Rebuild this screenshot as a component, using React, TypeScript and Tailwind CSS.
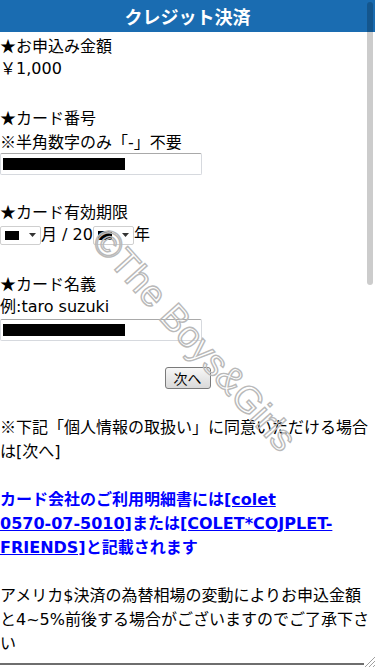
import React from "react";

const cjk = "font-['Noto_Sans_CJK_JP',sans-serif]";

function J({ children }: { children: React.ReactNode }) {
  return <span className={cjk}>{children}</span>;
}

function Line({ children }: { children?: React.ReactNode }) {
  return <div className="h-[24px] whitespace-nowrap">{children}</div>;
}

function Blank() {
  return <div className="h-[24px]" />;
}

function TextBox() {
  return (
    <div className="h-[22px] flex items-center">
      <div className="w-[202px] h-[22px] border border-[#d6d9de] border-t-[#a9a9a9] rounded-[2px] flex items-center pl-[2px] bg-white">
        <div className="w-[122px] h-[12px] bg-black" />
      </div>
    </div>
  );
}

function Select() {
  return (
    <div className="w-[41px] h-[19px] border border-[#cfcfcf] rounded-[2px] flex items-center pl-[4px] bg-white">
      <div className="w-[14px] h-[9px] bg-black" />
      <svg width="7" height="4" viewBox="0 0 7 4" className="ml-[10px]">
        <path d="M0 0 L7 0 L3.5 4 Z" fill="#333" />
      </svg>
    </div>
  );
}

export default function App() {
  return (
    <div className="relative min-h-[667px] h-[667px] overflow-hidden bg-white text-black text-[16px] leading-[24px] font-['DejaVu_Sans','Noto_Sans_CJK_JP',sans-serif]">
      <header className="h-[32px] bg-[#1a6cb1] flex items-center justify-center">
        <h1 className={`text-white font-bold text-[18px] leading-[24px] ${cjk}`}>クレジット決済</h1>
      </header>
      <main className="pt-[1px]">
        <Line><J>★</J>お申込み金額</Line>
        <Line>￥1,000</Line>
        <Blank />
        <Line><J>★</J>カード番号</Line>
        <Line><J>※</J>半角数字のみ「-」不要</Line>
        <TextBox />
        <Blank />
        <Line><J>★</J>カード有効期限</Line>
        <div className="h-[24px] flex items-center whitespace-nowrap">
          <Select />
          <span>月 / 20</span>
          <Select />
          <span>年</span>
        </div>
        <Blank />
        <Line><J>★</J>カード名義</Line>
        <Line>例:taro suzuki</Line>
        <TextBox />
        <Blank />
        <div className="h-[25px] flex justify-center">
          <button className={`mt-[2px] w-[46px] h-[22px] border border-[#7a7a7a] rounded-[3px] bg-linear-to-b from-[#f7f7f7] to-[#d9d9d9] text-[14px] leading-[20px] text-black ${cjk}`}>
            次へ
          </button>
        </div>
        <Blank />
        <p><J>※</J>下記「個人情報の取扱い」に同意いただける場合は[次へ]</p>
        <Blank />
        <p className="font-bold text-[#0000ff]">
          カード会社のご利用明細書には<a className="underline" href="#">[colet <span className="whitespace-nowrap">0570-07-5010]</span></a>または<a className="underline" href="#"><span className="whitespace-nowrap">[COLET*COJPLET-</span><wbr /><span className="whitespace-nowrap">FRIENDS]</span></a>と記載されます
        </p>
        <Blank />
        <p>アメリカ$決済の為替相場の変動によりお申込金額と4~5%前後する場合がございますのでご了承下さい</p>
      </main>

      <div className="pointer-events-none absolute left-[194px] top-[340px] -translate-x-1/2 -translate-y-1/2 rotate-[48deg] whitespace-nowrap font-['Liberation_Sans',sans-serif] text-[37px] leading-[40px] text-transparent [-webkit-text-stroke:1.4px_#b9b9b9]">
        ©The Boys&amp;Girls
      </div>

      <div className="pointer-events-none absolute top-[2px] right-[2px] w-[6px] h-[283px] rounded-full bg-black/20" />

      <div className="pointer-events-none absolute left-0 top-[663px] w-[364px] h-[2px] bg-[#6e6e6e]" />
      <svg className="pointer-events-none absolute right-0 bottom-0" width="12" height="12" viewBox="0 0 12 12">
        <path d="M2 12 L12 2 M6 12 L12 6 M10 12 L12 10" stroke="#a0a0a0" strokeWidth="1" />
      </svg>
    </div>
  );
}
